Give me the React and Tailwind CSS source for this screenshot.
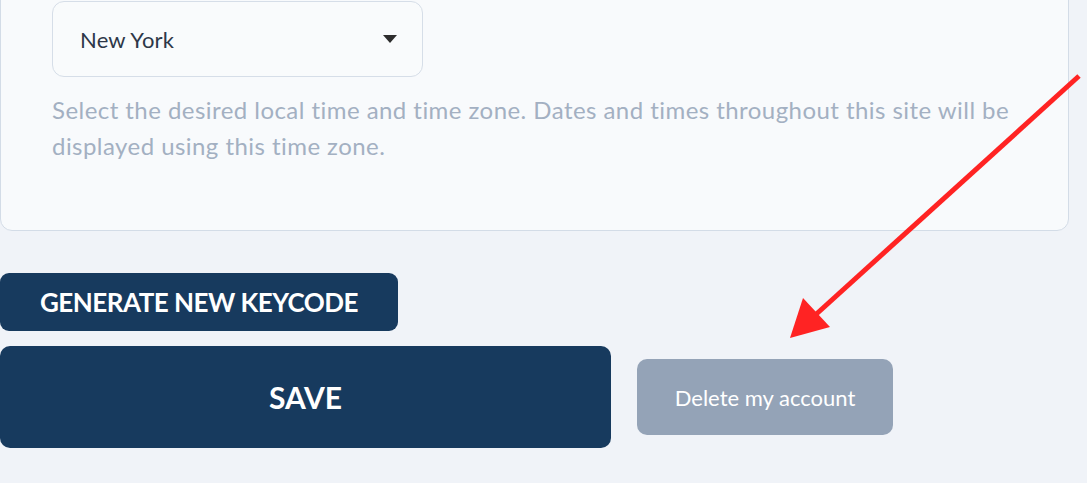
import React from "react";

export default function App() {
  return (
    <div
      className="relative h-[483px] w-[1087px] overflow-hidden bg-[#f0f3f8]"
      style={{ fontFamily: "Lato, 'Open Sans', sans-serif" }}
    >
      <div className="-mt-[30px] w-[1069px] rounded-[12px] border border-[#d3dce7] bg-[#f8fafc] pb-[66px] pl-[51px] pt-[30px]">
        <div className="flex h-[76px] w-[371px] items-center justify-between rounded-[12px] border border-[#d6dee8] bg-[#f9fbfc] pl-[27px] pr-[25px]">
          <span className="text-[22px] tracking-[0.2px] text-[#2d3748]">New York</span>
          <svg width="14" height="8" viewBox="0 0 14 8">
            <path d="M0 0 H14 L7 8 Z" fill="#2d2d2d" />
          </svg>
        </div>
        <p className="mt-[15px] w-[990px] text-[24px] leading-[36px] tracking-[0.45px] text-[#a3b0c2]">
          Select the desired local time and time zone. Dates and times throughout this site will be displayed using this time zone.
        </p>
      </div>

      <div className="mt-[42px] flex flex-col items-start gap-[15px]">
        <button className="flex h-[58px] w-[398px] items-center justify-center rounded-[9px] bg-[#173a5e] text-[26px] font-bold tracking-[-0.5px] text-white">
          GENERATE NEW KEYCODE
        </button>
        <div className="flex items-center gap-[26px]">
          <button className="flex h-[102px] w-[611px] items-center justify-center rounded-[10px] bg-[#173a5e] text-[30px] font-bold text-white">
            SAVE
          </button>
          <button className="flex h-[76px] w-[256px] items-center justify-center rounded-[10px] bg-[#94a3b7] text-[22px] text-white">
            Delete my account
          </button>
        </div>
      </div>

      <svg
        className="pointer-events-none absolute left-0 top-0"
        width="1087"
        height="483"
        viewBox="0 0 1087 483"
      >
        <line x1="1079" y1="76" x2="812" y2="318" stroke="#ff2323" strokeWidth="5" />
        <polygon points="790,338 803,298 830,327" fill="#ff2323" />
      </svg>
    </div>
  );
}
